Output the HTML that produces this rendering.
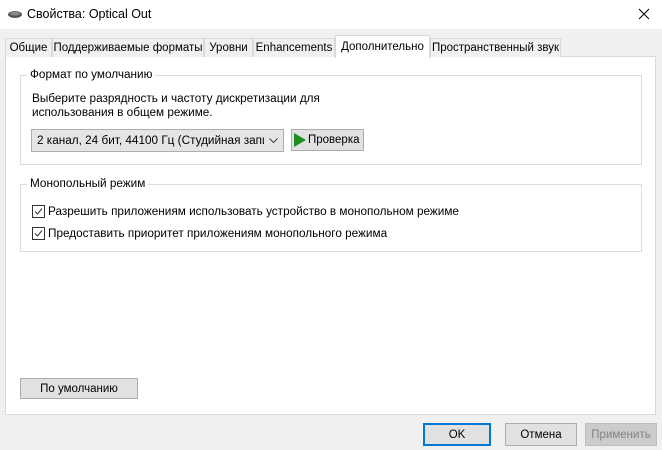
<!DOCTYPE html><html><head><meta charset="utf-8"><style>
*{margin:0;padding:0;box-sizing:border-box}
body{width:662px;height:450px;background:#f0f0f0;font-family:"Liberation Sans","DejaVu Sans",sans-serif;font-size:11.75px;color:#000;position:relative;overflow:hidden}
.a{position:absolute;white-space:nowrap}
.tab{position:absolute;top:38px;height:19px;border:1px solid #d9d9d9;border-bottom:none;background:#f0f0f0;padding:3px 0 0;text-align:center;font-size:11.5px}
.grp{position:absolute;border:1px solid #dcdcdc}
.lg{position:absolute;top:-8px;left:6px;background:#fff;padding:0 3px}
.btn{position:absolute;background:#e1e1e1;border:1px solid #adadad;text-align:center;font-size:11.5px}
.cb{position:absolute;width:13px;height:13px;border:1px solid #333;background:#fff}
</style></head><body>
<div class="a" style="left:0;top:0;width:662px;height:29px;background:#fff"></div>
<svg class="a" style="left:7px;top:10px" width="16" height="9"><ellipse cx="8" cy="4.5" rx="7" ry="3.5" fill="#555"/><ellipse cx="8" cy="3.5" rx="5" ry="2" fill="#888"/></svg>
<div class="a" style="left:27px;top:7px;font-size:12.5px">Свойства: Optical Out</div>
<svg class="a" style="left:638px;top:8px" width="12" height="12"><path d="M1 1L11 11M11 1L1 11" stroke="#000" stroke-width="1"/></svg>
<div class="a" style="left:5px;top:56px;width:651px;height:359px;background:#fff;border:1px solid #d9d9d9"></div>
<div class="tab" style="left:5px;width:47px">Общие</div>
<div class="tab" style="left:52px;width:152px">Поддерживаемые форматы</div>
<div class="tab" style="left:204px;width:49px">Уровни</div>
<div class="tab" style="left:253px;width:82px">Enhancements</div>
<div class="tab" style="left:430px;width:131px">Пространственный звук</div>
<div class="tab" style="left:335px;top:35px;width:95px;height:23px;background:#fff;padding-top:5px">Дополнительно</div>
<div class="grp" style="left:20px;top:75px;width:622px;height:90px"><div class="lg">Формат по умолчанию</div></div>
<div class="a" style="left:32px;top:92px;line-height:14px">Выберите разрядность и частоту дискретизации для<br>использования в общем режиме.</div>
<div class="a" style="left:31px;top:129px;width:253px;height:23px;border:1px solid #adadad;background:#e5e5e5;padding:4px 0 0 5px;overflow:hidden">2 канал, 24 бит, 44100 Гц (Студийная записі</div>
<div class="a" style="left:264px;top:130px;width:19px;height:21px;background:#e5e5e5"></div>
<svg class="a" style="left:269px;top:138px" width="9" height="6"><path d="M0.5 0.5L4.5 4.5L8.5 0.5" stroke="#444" fill="none"/></svg>
<div class="btn" style="left:291px;top:129px;width:73px;height:22px;padding-top:4px;text-align:left;padding-left:16px">Проверка</div>
<svg class="a" style="left:294px;top:133px" width="12" height="14"><path d="M0 0L12 7L0 14Z" fill="#1f8f1f"/></svg>
<div class="grp" style="left:20px;top:184px;width:622px;height:68px"><div class="lg">Монопольный режим</div></div>
<div class="cb" style="left:32px;top:205px"></div>
<svg class="a" style="left:33px;top:206px" width="11" height="11"><path d="M2 5.5L4.5 8L9 2.5" stroke="#333" fill="none"/></svg>
<div class="a" style="left:48px;top:205px">Разрешить приложениям использовать устройство в монопольном режиме</div>
<div class="cb" style="left:32px;top:227px"></div>
<svg class="a" style="left:33px;top:228px" width="11" height="11"><path d="M2 5.5L4.5 8L9 2.5" stroke="#333" fill="none"/></svg>
<div class="a" style="left:48px;top:227px">Предоставить приоритет приложениям монопольного режима</div>
<div class="btn" style="left:20px;top:378px;width:118px;height:21px;padding-top:4px">По умолчанию</div>
<div class="btn" style="left:423px;top:423px;width:68px;height:23px;border:2px solid #0078d7;padding-top:4px">OK</div>
<div class="btn" style="left:505px;top:423px;width:72px;height:23px;padding-top:5px">Отмена</div>
<div class="btn" style="left:585px;top:423px;width:72px;height:23px;padding-top:5px;background:#ccc;border-color:#bfbfbf;color:#838383">Применить</div>
</body></html>
